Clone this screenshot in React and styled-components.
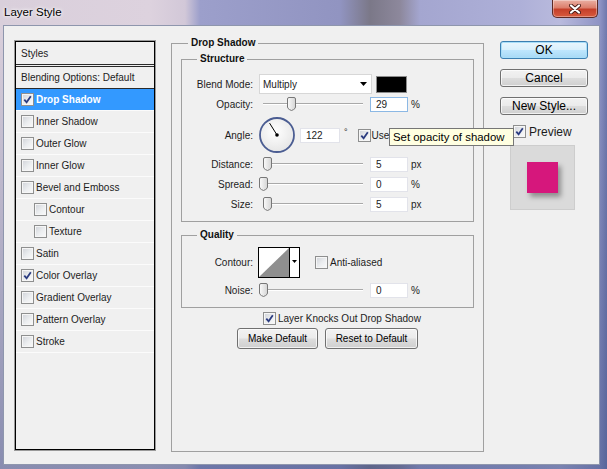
import React from "react";
import styled, { createGlobalStyle, css } from "styled-components";

const GlobalStyle = createGlobalStyle`
  html, body {
    margin: 0;
    padding: 0;
  }
  body {
    background: #9da0c8;
    font-family: "Liberation Sans", Arial, sans-serif;
    color: #1c1c1c;
  }
`;

const Window = styled.div`
  width: 607px;
  height: 469px;
  display: flex;
  flex-direction: column;
  overflow: hidden;
  background:
    linear-gradient(to bottom, rgba(0, 0, 0, 0) 0, rgba(0, 0, 0, 0) 30px, rgba(70, 85, 140, 0.55) 100%),
    linear-gradient(
      to right,
      #d9cfdb 0,
      #ddd2de 150px,
      #d2c8d8 185px,
      #9c9fcb 200px,
      #9194c1 340px,
      #7b7888 370px,
      #8d889c 400px,
      #a4a6d0 420px,
      #aeb0d8 520px,
      #b9badd 560px,
      #8e93c4 600px,
      #6f78ac 607px
    );
`;

const TitleBar = styled.div`
  height: 25px;
  flex: none;
  display: flex;
  align-items: flex-start;
  justify-content: space-between;
  padding-left: 4px;
`;

const Title = styled.div`
  font-size: 11.5px;
  line-height: 24px;
  color: #000;
  text-shadow: 0 0 5px #fff, 0 0 3px #fff;
`;

const CloseButton = styled.div`
  width: 46px;
  height: 18px;
  margin-right: 9px;
  box-sizing: border-box;
  border: 1px solid #5b2a26;
  border-top: none;
  border-radius: 0 0 5px 5px;
  background: linear-gradient(#eab0a3 0%, #dc7f6c 45%, #c5402a 55%, #d75a3e 100%);
  box-shadow: inset 0 0 0 1px rgba(255, 255, 255, 0.35);
  display: flex;
  align-items: center;
  justify-content: center;
`;

const Client = styled.div`
  position: relative;
  flex: 1;
  margin: 0 7px 4px 3px;
  background: #f0f0f0;
  border: 1px solid #8e96ad;
  display: flex;
  align-items: flex-start;
  gap: 16px;
  padding: 15px 0 0 11px;
  font-size: 10px;
`;

/* ---------- left styles list ---------- */

const StylesPanel = styled.div`
  width: 140px;
  height: 409px;
  box-sizing: border-box;
  border: 1px solid #000;
  box-shadow: 0 0 0 1px #9a9a9a;
  display: flex;
  flex-direction: column;
  flex: none;
`;

const PanelHeader = styled.div`
  height: 22px;
  display: flex;
  align-items: center;
  padding-left: 5px;
  border-bottom: 3px double #2a2a2a;
`;

const StyleRow = styled.div`
  height: 21px;
  display: flex;
  align-items: center;
  gap: 2px;
  padding-left: ${(p) => 5 + (p.$indent ? 13 : 0)}px;
  border-bottom: 1px solid ${(p) => (p.$dark ? "#2a2a2a" : "#fbfbfb")};
  ${(p) =>
    p.$selected &&
    css`
      background: #3399ff;
      color: #fff;
      font-weight: bold;
    `}
`;

/* ---------- checkbox ---------- */

const Box = styled.span`
  width: 13px;
  height: 13px;
  flex: none;
  box-sizing: border-box;
  border: 1px solid #8e8f8f;
  background: linear-gradient(135deg, #cfd2d8 0%, #eceef0 55%, #fafafa 100%);
  box-shadow: inset 0 0 0 1px #f6f6f6;
  display: inline-flex;
  align-items: center;
  justify-content: center;
`;

function CheckBox({ checked }) {
  return (
    <Box>
      {checked && (
        <svg width="9" height="9" viewBox="0 0 9 9">
          <path d="M1.3 4.6 L3.6 7.3 L7.8 1.2" fill="none" stroke="#2b3c80" strokeWidth="1.8" />
        </svg>
      )}
    </Box>
  );
}

/* ---------- group boxes ---------- */

const FieldGroup = styled.div`
  box-sizing: border-box;
  border: 1px solid #a0a0a0;
  display: flex;
  flex-direction: column;
`;

const DropGroup = styled(FieldGroup)`
  width: 313px;
  height: 409px;
  margin-top: 2px;
  flex: none;
`;

const SubGroup = styled(FieldGroup)`
  margin: ${(p) => p.$top}px 9px 0;
  padding-bottom: 7px;
`;

const Legend = styled.div`
  align-self: flex-start;
  height: 12px;
  margin: -7px 0 0 ${(p) => p.$indent}px;
  padding: 0 3px;
  background: #f0f0f0;
  font-weight: bold;
  font-size: 10px;
  line-height: 12px;
  color: #111;
`;

const Row = styled.div`
  display: flex;
  align-items: center;
  height: ${(p) => p.$h || 20}px;
  margin-top: ${(p) => p.$mt || 0}px;
`;

const Label = styled.div`
  width: 71px;
  margin-right: 6px;
  text-align: right;
  flex: none;
`;

const Select = styled.div`
  width: 113px;
  height: 20px;
  box-sizing: border-box;
  border: 1px solid #d7d7d7;
  background: #fff;
  display: flex;
  align-items: center;
  justify-content: space-between;
  padding: 0 4px 0 3px;
`;

const Swatch = styled.div`
  width: 31px;
  height: 17px;
  margin-left: 4px;
  box-sizing: border-box;
  border: 1px solid #8c8c8c;
  background: #000;
`;

const Slider = styled.div`
  position: relative;
  width: 104px;
  height: 14px;
  flex: none;
  &::before {
    content: "";
    position: absolute;
    left: 4px;
    right: 0;
    top: 6px;
    height: 1px;
    background: #a9a9a9;
    box-shadow: 0 1px 0 #fff;
  }
`;

const ThumbIcon = styled.svg`
  position: absolute;
  top: 0;
`;

const NumInput = styled.div`
  width: ${(p) => p.$w || 38}px;
  height: 15px;
  margin-left: ${(p) => p.$ml ?? 7}px;
  box-sizing: border-box;
  border: 1px solid ${(p) => (p.$focus ? "#8cb8e4" : "#e2e3ea")};
  background: #fff;
  padding-left: 5px;
  line-height: 13px;
  flex: none;
`;

const Unit = styled.span`
  margin-left: ${(p) => p.$ml ?? 3}px;
  font-size: 10px;
`;

const Degree = styled.span`
  align-self: flex-start;
  margin: 11px 0 0 4px;
  font-size: 9px;
`;

const CheckLabel = styled.div`
  display: flex;
  align-items: center;
  gap: ${(p) => p.$gap ?? 2}px;
  margin-left: ${(p) => p.$ml || 0}px;
  white-space: nowrap;
  font-size: ${(p) => p.$size || 10}px;
`;

const ClippedCheckLabel = styled(CheckLabel)`
  width: 32px;
  overflow: hidden;
`;

const ContourPicker = styled.svg`
  display: block;
  flex: none;
  margin-left: -1px;
`;

const ButtonRow = styled.div`
  display: flex;
  justify-content: center;
  gap: 7px;
  margin-top: 2px;
`;

const winButton = css`
  box-sizing: border-box;
  padding: 0;
  border: 1px solid #707070;
  border-radius: 3px;
  background: linear-gradient(#f2f2f2 0%, #ebebeb 48%, #dddddd 52%, #cfcfcf 100%);
  box-shadow: inset 0 0 0 1px rgba(255, 255, 255, 0.7);
  font-family: "Liberation Sans", Arial, sans-serif;
  color: #000;
`;

const SmallButton = styled.button`
  ${winButton}
  height: 21px;
  width: ${(p) => p.$w}px;
  font-size: 10px;
`;

/* ---------- right column ---------- */

const RightColumn = styled.div`
  width: 88px;
  display: flex;
  flex-direction: column;
  flex: none;
`;

const DialogButton = styled.button`
  ${winButton}
  width: 88px;
  height: 18px;
  margin-bottom: 10px;
  font-size: 12px;
  line-height: 14px;
  ${(p) =>
    p.$default &&
    css`
      border-color: #3c7fb1;
      box-shadow: inset 0 0 0 1px #a8def8;
      background: linear-gradient(#eaf6fd 0%, #d9f0fc 48%, #bee6fd 52%, #a7d9f5 100%);
    `}
`;

const PreviewToggle = styled(CheckLabel)`
  height: 13px;
`;

const PreviewBox = styled.div`
  width: 65px;
  height: 65px;
  margin: 7px 0 0 10px;
  box-sizing: border-box;
  border: 1px solid #cdcdcd;
  background: #dadada;
  display: flex;
  align-items: center;
  justify-content: center;
`;

const PinkSquare = styled.div`
  width: 31px;
  height: 31px;
  background: #d6177c;
  box-shadow: 3px 4px 5px rgba(0, 0, 0, 0.35);
`;

const Tooltip = styled.div`
  position: absolute;
  left: 385px;
  top: 102px;
  width: 125px;
  height: 18px;
  box-sizing: border-box;
  border: 1px solid #767676;
  background: #ffffe1;
  padding-left: 3px;
  font-size: 11.4px;
  line-height: 16px;
  color: #000;
  white-space: nowrap;
`;

const styleItems = [
  { label: "Drop Shadow", checked: true, selected: true },
  { label: "Inner Shadow" },
  { label: "Outer Glow" },
  { label: "Inner Glow" },
  { label: "Bevel and Emboss" },
  { label: "Contour", indent: true },
  { label: "Texture", indent: true },
  { label: "Satin" },
  { label: "Color Overlay", checked: true },
  { label: "Gradient Overlay" },
  { label: "Pattern Overlay" },
  { label: "Stroke" },
];

function SliderControl({ pos }) {
  return (
    <Slider>
      <ThumbIcon width="9" height="14" viewBox="0 0 9 14" style={{ left: pos }}>
        <defs>
          <linearGradient id="thumbFill" x1="0" y1="0" x2="1" y2="0">
            <stop offset="0" stopColor="#fbfbfb" />
            <stop offset="1" stopColor="#d4d4d4" />
          </linearGradient>
        </defs>
        <path
          d="M2 0.5 H7 Q8.5 0.5 8.5 2 V10 Q8.5 11.5 6.5 12.6 L4.5 13.5 L2.5 12.6 Q0.5 11.5 0.5 10 V2 Q0.5 0.5 2 0.5 Z"
          fill="url(#thumbFill)"
          stroke="#777"
        />
      </ThumbIcon>
    </Slider>
  );
}

function AngleDial({ angle }) {
  const r = 14;
  const rad = (angle * Math.PI) / 180;
  const x = 19 + Math.cos(rad) * r;
  const y = 19 - Math.sin(rad) * r;
  return (
    <svg width="38" height="38" viewBox="0 0 38 38" style={{ marginLeft: -1, flex: "none" }}>
      <defs>
        <radialGradient id="dialFill" cx="0.45" cy="0.4" r="0.7">
          <stop offset="0" stopColor="#ffffff" />
          <stop offset="1" stopColor="#e2e2e2" />
        </radialGradient>
      </defs>
      <circle cx="19" cy="19" r="17" fill="url(#dialFill)" stroke="#4b5d92" strokeWidth="1.8" />
      <line x1="19" y1="19" x2={x} y2={y} stroke="#000" strokeWidth="1" />
      <circle cx="19" cy="19" r="1.8" fill="#000" />
    </svg>
  );
}

function App() {
  return (
    <Window>
      <GlobalStyle />
      <TitleBar>
        <Title>Layer Style</Title>
        <CloseButton>
          <svg width="12" height="10" viewBox="0 0 12 10">
            <path d="M2 1.5 L10 8.5 M10 1.5 L2 8.5" stroke="#4a1d18" strokeWidth="4" strokeLinecap="round" />
            <path d="M2 1.5 L10 8.5 M10 1.5 L2 8.5" stroke="#fff" strokeWidth="2.2" strokeLinecap="round" />
          </svg>
        </CloseButton>
      </TitleBar>

      <Client>
        <StylesPanel>
          <PanelHeader>Styles</PanelHeader>
          <StyleRow $dark>Blending Options: Default</StyleRow>
          {styleItems.map((item) => (
            <StyleRow key={item.label} $indent={item.indent} $selected={item.selected}>
              <CheckBox checked={item.checked} />
              <span>{item.label}</span>
            </StyleRow>
          ))}
        </StylesPanel>

        <DropGroup>
          <Legend $indent={16}>Drop Shadow</Legend>

          <SubGroup $top={10}>
            <Legend $indent={15}>Structure</Legend>
            <Row $mt={9}>
              <Label>Blend Mode:</Label>
              <Select>
                <span>Multiply</span>
                <svg width="7" height="4" viewBox="0 0 7 4">
                  <path d="M0 0 H7 L3.5 4 Z" fill="#000" />
                </svg>
              </Select>
              <Swatch />
            </Row>
            <Row>
              <Label>Opacity:</Label>
              <SliderControl pos={28} />
              <NumInput $focus>29</NumInput>
              <Unit>%</Unit>
            </Row>
            <Row $h={38} $mt={2}>
              <Label>Angle:</Label>
              <AngleDial angle={122} />
              <NumInput $ml={4} $w={40}>122</NumInput>
              <Degree>°</Degree>
              <ClippedCheckLabel $ml={10} $gap={1}>
                <CheckBox checked />
                <span>Use Global Light</span>
              </ClippedCheckLabel>
            </Row>
            <Row>
              <Label>Distance:</Label>
              <SliderControl pos={4} />
              <NumInput>5</NumInput>
              <Unit>px</Unit>
            </Row>
            <Row>
              <Label>Spread:</Label>
              <SliderControl pos={0} />
              <NumInput>0</NumInput>
              <Unit>%</Unit>
            </Row>
            <Row>
              <Label>Size:</Label>
              <SliderControl pos={4} />
              <NumInput>5</NumInput>
              <Unit>px</Unit>
            </Row>
          </SubGroup>

          <SubGroup $top={13}>
            <Legend $indent={15}>Quality</Legend>
            <Row $h={32} $mt={5}>
              <Label>Contour:</Label>
              <ContourPicker width="42" height="31" viewBox="0 0 42 31">
                <rect x="0.5" y="0.5" width="41" height="30" fill="#fff" stroke="#000" />
                <path d="M1 30 L31 1 L31 30 Z" fill="#8f8f8f" />
                <line x1="31.5" y1="0" x2="31.5" y2="31" stroke="#000" />
                <path d="M34 13 H39 L36.5 16 Z" fill="#000" />
              </ContourPicker>
              <CheckLabel $ml={15}>
                <CheckBox />
                <span>Anti-aliased</span>
              </CheckLabel>
            </Row>
            <Row $mt={2}>
              <Label>Noise:</Label>
              <SliderControl pos={0} />
              <NumInput>0</NumInput>
              <Unit>%</Unit>
            </Row>
          </SubGroup>

          <Row $h={16} $mt={2}>
            <CheckLabel $ml={91}>
              <CheckBox checked />
              <span>Layer Knocks Out Drop Shadow</span>
            </CheckLabel>
          </Row>
          <ButtonRow>
            <SmallButton $w={81}>Make Default</SmallButton>
            <SmallButton $w={93}>Reset to Default</SmallButton>
          </ButtonRow>
        </DropGroup>

        <RightColumn>
          <DialogButton $default>OK</DialogButton>
          <DialogButton>Cancel</DialogButton>
          <DialogButton>New Style...</DialogButton>
          <PreviewToggle $ml={13} $gap={3} $size={12}>
            <CheckBox checked />
            <span>Preview</span>
          </PreviewToggle>
          <PreviewBox>
            <PinkSquare />
          </PreviewBox>
        </RightColumn>

        <Tooltip>Set opacity of shadow</Tooltip>
      </Client>
    </Window>
  );
}

export default App;
